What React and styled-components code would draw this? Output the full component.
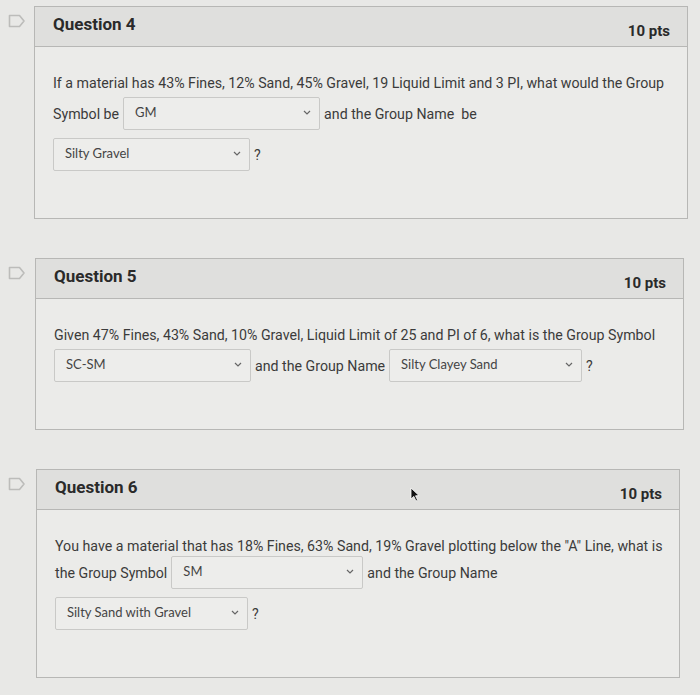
import React from "react";
import styled, { createGlobalStyle } from "styled-components";

const GlobalStyle = createGlobalStyle`
  body {
    margin: 0;
    background: #e8e8e6;
    font-family: Roboto, "Liberation Sans", sans-serif;
    color: #3b3b3b;
  }
`;

const Page = styled.div`
  position: relative;
  display: flex;
  flex-direction: column;
  gap: 39px;
  padding: 6px 0 18px;
`;

const QuestionRow = styled.div`
  display: flex;
  padding-right: ${(p) => p.$inset}px;
`;

const FlagCol = styled.div`
  flex: none;
  width: ${(p) => p.$left}px;
  box-sizing: border-box;
  padding: 7px 0 0 8px;
`;

const Card = styled.div`
  flex: 1;
  min-width: 0;
  border: 1px solid #b7b7b5;
  background: #ebebe9;
`;

const Header = styled.div`
  height: 39px;
  display: flex;
  justify-content: space-between;
  align-items: center;
  padding: 0 17px 0 18px;
  background: #dfdfdd;
  border-bottom: 1px solid #b7b7b5;
`;

const Title = styled.h2`
  margin: -6px 0 0;
  font-size: 17px;
  font-weight: 700;
  color: #2a2a2a;
`;

const Points = styled.span`
  margin-top: 9px;
  font-size: 15px;
  font-weight: 700;
  color: #2a2a2a;
`;

const Body = styled.div`
  display: flex;
  flex-direction: column;
  padding: 25px 18px 47px;
  font-size: 14.2px;
`;

const Line = styled.div`
  display: flex;
  align-items: center;
  gap: 4px;
  min-height: 22px;
  margin-top: ${(p) => p.$top || 0}px;
  white-space: nowrap;
`;

const SelectBox = styled.div`
  box-sizing: border-box;
  width: ${(p) => p.$w}px;
  height: 33px;
  display: flex;
  justify-content: space-between;
  align-items: center;
  padding: 0 8px 3px 11px;
  border: 1px solid #c9c9c7;
  border-radius: 2px;
  background: #ededeb;
  font-family: Lato, "Noto Sans", sans-serif;
  font-size: 13px;
  color: #444;
`;

const Cursor = styled.svg`
  position: absolute;
  left: 410px;
  top: 487px;
`;

const Flag = () => (
  <svg width="18" height="14" viewBox="0 0 18 14">
    <path
      d="M1.5 1.5 H11.5 L16 7 L11.5 12.5 H1.5 Z"
      fill="none"
      stroke="#bcbcba"
      strokeWidth="1.6"
      strokeLinejoin="round"
    />
  </svg>
);

const Select = ({ value, w = 196 }) => (
  <SelectBox $w={w}>
    <span>{value}</span>
    <svg width="8" height="5" viewBox="0 0 8 5">
      <path d="M1 1 L4 4 L7 1" fill="none" stroke="#666" strokeWidth="1.2" />
    </svg>
  </SelectBox>
);

const Question = ({ num, inset, left, children }) => (
  <QuestionRow $inset={inset}>
    <FlagCol $left={left}>
      <Flag />
    </FlagCol>
    <Card>
      <Header>
        <Title>Question {num}</Title>
        <Points>10 pts</Points>
      </Header>
      <Body>{children}</Body>
    </Card>
  </QuestionRow>
);

export default function App() {
  return (
    <Page>
      <GlobalStyle />
      <Question num={4} inset={12} left={34}>
        <Line>
          If a material has 43% Fines, 12% Sand, 45% Gravel, 19 Liquid Limit and 3 PI, what would the Group
        </Line>
        <Line $top={3}>
          Symbol be
          <Select value="GM" w={197} />
          and the Group Name{"\u00a0 "}be
        </Line>
        <Line $top={8}>
          <Select value="Silty Gravel" w={197} />?
        </Line>
      </Question>
      <Question num={5} inset={16} left={35}>
        <Line>
          Given 47% Fines, 43% Sand, 10% Gravel, Liquid Limit of 25 and PI of 6, what is the Group Symbol
        </Line>
        <Line $top={3}>
          <Select value="SC-SM" w={197} />
          and the Group Name
          <Select value="Silty Clayey Sand" w={193} />?
        </Line>
      </Question>
      <Question num={6} inset={20} left={36}>
        <Line>
          You have a material that has 18% Fines, 63% Sand, 19% Gravel plotting below the "A" Line, what is
        </Line>
        <Line $top={-1}>
          the Group Symbol
          <Select value="SM" w={192} />
          and the Group Name
        </Line>
        <Line $top={8}>
          <Select value="Silty Sand with Gravel" w={193} />?
        </Line>
      </Question>
      <Cursor width="10" height="15" viewBox="0 0 10 15">
        <path d="M1 1 L1 12 L3.8 9.4 L6 14 L7.6 13.2 L5.5 8.8 L9 8.6 Z" fill="#111" stroke="#fff" strokeWidth="0.8" />
      </Cursor>
    </Page>
  );
}
